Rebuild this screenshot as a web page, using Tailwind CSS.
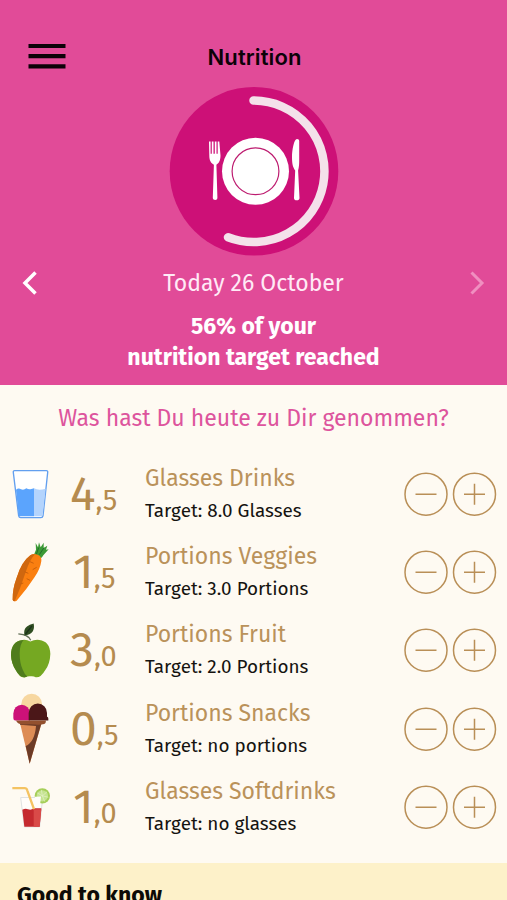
<!DOCTYPE html>
<html lang="en">
<head>
<meta charset="utf-8">
<title>Nutrition</title>
<script src="https://cdn.jsdelivr.net/npm/@tailwindcss/browser@4"></script>
</head>
<body class="w-[507px] h-[900px] overflow-hidden bg-[#fefaf2] font-['Fira_Sans','Noto_Sans',sans-serif]">
<header class="h-[385px] bg-[#e14b98] flex flex-col items-center">
  <div class="w-full h-[87px] pt-[43px] px-[28px] grid grid-cols-[38px_1fr_38px]">
    <svg class="w-[38px] h-[27px]" viewBox="0 0 38 27" fill="#0c0208"><path d="M.5 1h37v4H.5zM.5 11h37v4.200H.5zM.5 21.200h37v4.200H.5z"/></svg>
    <h1 class="pl-[2px] text-center font-['Inter'] font-semibold text-[22px] leading-[29px] tracking-[0.1px] text-[#0c0208] whitespace-nowrap">Nutrition</h1>
  </div>
  <svg class="w-[170px] h-[170px] shrink-0" viewBox="0 0 170 170">
    <circle cx="85" cy="84.300" r="84.300" fill="#cd1077"/>
    <path d="M84.500 13.500A70.800 70.800 0 1 1 59 150.300" fill="none" stroke="#f4e1ea" stroke-width="8.500" stroke-linecap="round"/>
    <circle cx="86.500" cy="84.300" r="33.500" fill="#fff"/>
    <circle cx="86.500" cy="84.300" r="23.400" fill="none" stroke="#bd1c70" stroke-width="1.200"/>
    <path d="M40 54.500h1.600v12.200h1.200V54.500h1.700v12.200h1.300V54.500h1.700v12.200h1.200V54.500h1.600l1.200 14c0 5-1.500 7.500-4.100 9.300l1 33c0 1.800-1 2.200-2.200 2.200s-2.400-.4-2.400-2.200l1.100-33c-3-1.800-4.600-4.300-4.600-9.300z" fill="#fff"/>
    <path d="M130.200 54c0-1.200-.8-2-2.200-2-3 0-5 11-5 18 0 6.500.8 10 3.200 13.500l-1.200 27.400c0 1.700 1 2.300 2.700 2.300s2.800-.6 2.800-2.300l-1.400-27.400c1-3 1.100-7 1.100-10z" fill="#fff"/>
  </svg>
  <div class="w-full h-[51px] px-[22px] flex items-center justify-between text-white">
    <svg class="w-[16px] h-[26px]" viewBox="0 0 16 26" fill="none" stroke="#fff" stroke-width="3.500"><path d="M13.500 2.500 3 13l10.500 10.500"/></svg>
    <p class="text-[23px] leading-[30px] whitespace-nowrap text-[#ffeaf6]">Today 26 October</p>
    <svg class="w-[16px] h-[26px]" viewBox="0 0 16 26" fill="none" stroke="#f08fc0" stroke-width="3"><path d="M2.500 2.500 13 13 2.500 23.500"/></svg>
  </div>
  <p class="mt-[3px] text-center font-bold text-[23px] leading-[31px] text-white whitespace-nowrap">56% of your<br>nutrition target reached</p>
</header>
<main>
  <h2 class="h-[70px] pt-[17px] text-center text-[23px] leading-[32px] text-[#dd549d] whitespace-nowrap">Was hast Du heute zu Dir genommen?</h2>
  <section class="h-[407.500px]">
    <div class="h-[78.2px] flex">
      <svg class="w-[55px] h-[78.2px] shrink-0" viewBox="0 0 165 234.600">
        <path d="M44 47h95q5 0 4 6l-14 130q-1 5-6 5H62q-5 0-6-5L40 53q-1-6 4-6z" fill="#fff" stroke="#629fef" stroke-width="4"/>
        <path d="M48 104q8-7 15-1 8 4 16-3 8 5 15 2l8-2v84H60q-3 0-4-4z" fill="#5ba4fd"/>
        <path d="M102 100q14 8 35 1l-9 79q-1 4-5 4h-21z" fill="#b4d4fd"/>
      </svg>
      <div class="w-[90px] pl-[15px] flex items-baseline text-[#b58b4f] text-[48px] leading-[78px]"><span>4</span><span class="text-[29px]">,5</span></div>
      <div class="w-[259px] pt-[7px] whitespace-nowrap"><h3 class="text-[23px] leading-[32px] text-[#ba925a]">Glasses Drinks</h3><p class="text-[18.9px] leading-[34px] text-[#151310]">Target: 8.0 Glasses</p></div>
      <svg class="w-[94px] h-[78.2px]" viewBox="0 0 94 78.200" fill="none" stroke="#b98f57" stroke-width="1.500"><circle cx="22" cy="39.200" r="21"/><circle cx="70.500" cy="39.200" r="21"/><path d="M11.500 39.200h21M60 39.200h21M70.500 28.700v21"/></svg>
    </div>
    <div class="h-[78.2px] flex">
      <svg class="w-[55px] h-[78.2px] shrink-0" viewBox="0 0 165 234.600">
        <path d="M101 68q3-9 7-18l-1-20 7 13 3-15 5 15 9-14v16l11-7-4 12 8-1-16 18q-4 8-10 11z" fill="#3c9a35"/>
        <path d="M109 64l7-20M118 65l14-21" stroke="#226b2b" stroke-width="3"/>
        <path d="M91 67q9-7 22-2 13 5 11 19-3 23-20 48-24 37-54 71-9 5-12-3-1-31 12-66 15-48 41-67z" fill="#fa7f10"/>
        <path d="M91 67q7-5 14-3-15 14-29 56-13 42-32 85-6 0-6-5-1-31 12-66 15-48 41-67z" fill="#cf670f"/>
        <path d="M90 86l11 5M98 110l12-7M73 116l12 5M80 137l10 5M59 154l11-4" stroke="#c9600c" stroke-width="3"/>
      </svg>
      <div class="w-[90px] pl-[18px] flex items-baseline text-[#b58b4f] text-[48px] leading-[78px]"><span>1</span><span class="text-[29px]">,5</span></div>
      <div class="w-[259px] pt-[7px] whitespace-nowrap"><h3 class="text-[23px] leading-[32px] text-[#ba925a]">Portions Veggies</h3><p class="text-[18.9px] leading-[34px] text-[#151310]">Target: 3.0 Portions</p></div>
      <svg class="w-[94px] h-[78.2px]" viewBox="0 0 94 78.200" fill="none" stroke="#b98f57" stroke-width="1.500"><circle cx="22" cy="39.200" r="21"/><circle cx="70.500" cy="39.200" r="21"/><path d="M11.500 39.200h21M60 39.200h21M70.500 28.700v21"/></svg>
    </div>
    <div class="h-[78.2px] flex">
      <svg class="w-[55px] h-[78.2px] shrink-0" viewBox="0 4.200 165 234.600">
        <path d="M92 92Q88 76 55 73M76 77l12 8" fill="none" stroke="#637058" stroke-width="4"/>
        <path d="M73 78q-3-20 8-27 7-6 20-9 3 15-3 24-7 10-25 12z" fill="#304e22"/>
        <path d="M76 74l20-25" stroke="#1b3219" stroke-width="4"/>
        <path d="M91 96q13-7 27-5 32 4 33 42-1 29-15 48-14 24-29 22-6-4-15-3-9-1-16 3-16 4-28-20-14-21-15-46 0-42 34-46 13-2 24 5z" fill="#75a822"/>
        <path d="M71 91q-12 12-12 41 0 29 9 48 5 14 14 21-19 9-34-18-14-21-15-46 0-43 38-46z" fill="#4f7c1d"/>
      </svg>
      <div class="w-[90px] pl-[15px] flex items-baseline text-[#b58b4f] text-[48px] leading-[78px]"><span>3</span><span class="text-[29px]">,0</span></div>
      <div class="w-[259px] pt-[7px] whitespace-nowrap"><h3 class="text-[23px] leading-[32px] text-[#ba925a]">Portions Fruit</h3><p class="text-[18.9px] leading-[34px] text-[#151310]">Target: 2.0 Portions</p></div>
      <svg class="w-[94px] h-[78.2px]" viewBox="0 0 94 78.200" fill="none" stroke="#b98f57" stroke-width="1.500"><circle cx="22" cy="39.200" r="21"/><circle cx="70.500" cy="39.200" r="21"/><path d="M11.500 39.200h21M60 39.200h21M70.500 28.700v21"/></svg>
    </div>
    <div class="h-[78.2px] flex">
      <svg class="w-[55px] h-[78.2px] shrink-0" viewBox="0 238.800 165 234.600">
        <circle cx="95" cy="281" r="31" fill="#f7d7a0"/>
        <path d="M40 323v-13a25 27 0 0 1 50 0v20H45q-5 0-5-7z" fill="#cc1178"/>
        <path d="M86 330v-22a27 28 0 0 1 55 0v11q5 1 4 11z" fill="#4b1718"/>
        <path d="M60 338h65L89 460z" fill="#dd8c55"/>
        <path d="M112 336h13L89 460 77 407q27-11 31-60l-48-4v-7z" fill="#6c3b27"/>
        <path d="M48 330h90q0 8-5 11-13 3-28 1-17-1-32 0-20 1-25-12z" fill="#93502e"/>
      </svg>
      <div class="w-[90px] pl-[15px] flex items-baseline text-[#b58b4f] text-[48px] leading-[78px]"><span>0</span><span class="text-[29px]">,5</span></div>
      <div class="w-[259px] pt-[7px] whitespace-nowrap"><h3 class="text-[23px] leading-[32px] text-[#ba925a]">Portions Snacks</h3><p class="text-[18.9px] leading-[34px] text-[#151310]">Target: no portions</p></div>
      <svg class="w-[94px] h-[78.2px]" viewBox="0 0 94 78.200" fill="none" stroke="#b98f57" stroke-width="1.500"><circle cx="22" cy="39.200" r="21"/><circle cx="70.500" cy="39.200" r="21"/><path d="M11.500 39.200h21M60 39.200h21M70.500 28.700v21"/></svg>
    </div>
    <div class="h-[78.2px] flex">
      <svg class="w-[55px] h-[78.2px] shrink-0" viewBox="0 8.400 165 234.600">
        <path d="M62 97h66l-9 88H73z" fill="#fffdfa" stroke="#dfe2e2" stroke-width="3"/>
        <circle cx="127" cy="92" r="23" fill="#a5ce58"/><circle cx="127" cy="92" r="17" fill="#c5e391"/>
        <path d="M127 92l-3-18m3 18 14-12m-14 12 18 4m-18-4 7 17m-7-17-15-9" stroke="#e6f2c8" stroke-width="2"/>
        <path d="M105 95l18-1-3 27q-12-4-16-20z" fill="#fffdfa"/>
        <path d="M67 134q9-6 17-2 9 4 17-3h23l-5 56H73z" fill="#c52a2f"/><path d="M101 132h23l-5 53h-18z" fill="#d94a48"/>
        <path d="M37 69h37q6 0 8 7l20 56" fill="none" stroke="#f4c362" stroke-width="7"/>
      </svg>
      <div class="w-[90px] pl-[18px] flex items-baseline text-[#b58b4f] text-[48px] leading-[78px]"><span>1</span><span class="text-[29px]">,0</span></div>
      <div class="w-[259px] pt-[7px] whitespace-nowrap"><h3 class="text-[23px] leading-[32px] text-[#ba925a]">Glasses Softdrinks</h3><p class="text-[18.9px] leading-[34px] text-[#151310]">Target: no glasses</p></div>
      <svg class="w-[94px] h-[78.2px]" viewBox="0 0 94 78.200" fill="none" stroke="#b98f57" stroke-width="1.500"><circle cx="22" cy="39.200" r="21"/><circle cx="70.500" cy="39.200" r="21"/><path d="M11.500 39.200h21M60 39.200h21M70.500 28.700v21"/></svg>
    </div>
  </section>
</main>
<section class="h-[38px] overflow-hidden bg-[#fdf1c9] pl-[17px] pt-[16px]"><h2 class="font-bold text-[23px] leading-[32px] text-[#0d0b06] whitespace-nowrap">Good to know</h2></section>
</body>
</html>
